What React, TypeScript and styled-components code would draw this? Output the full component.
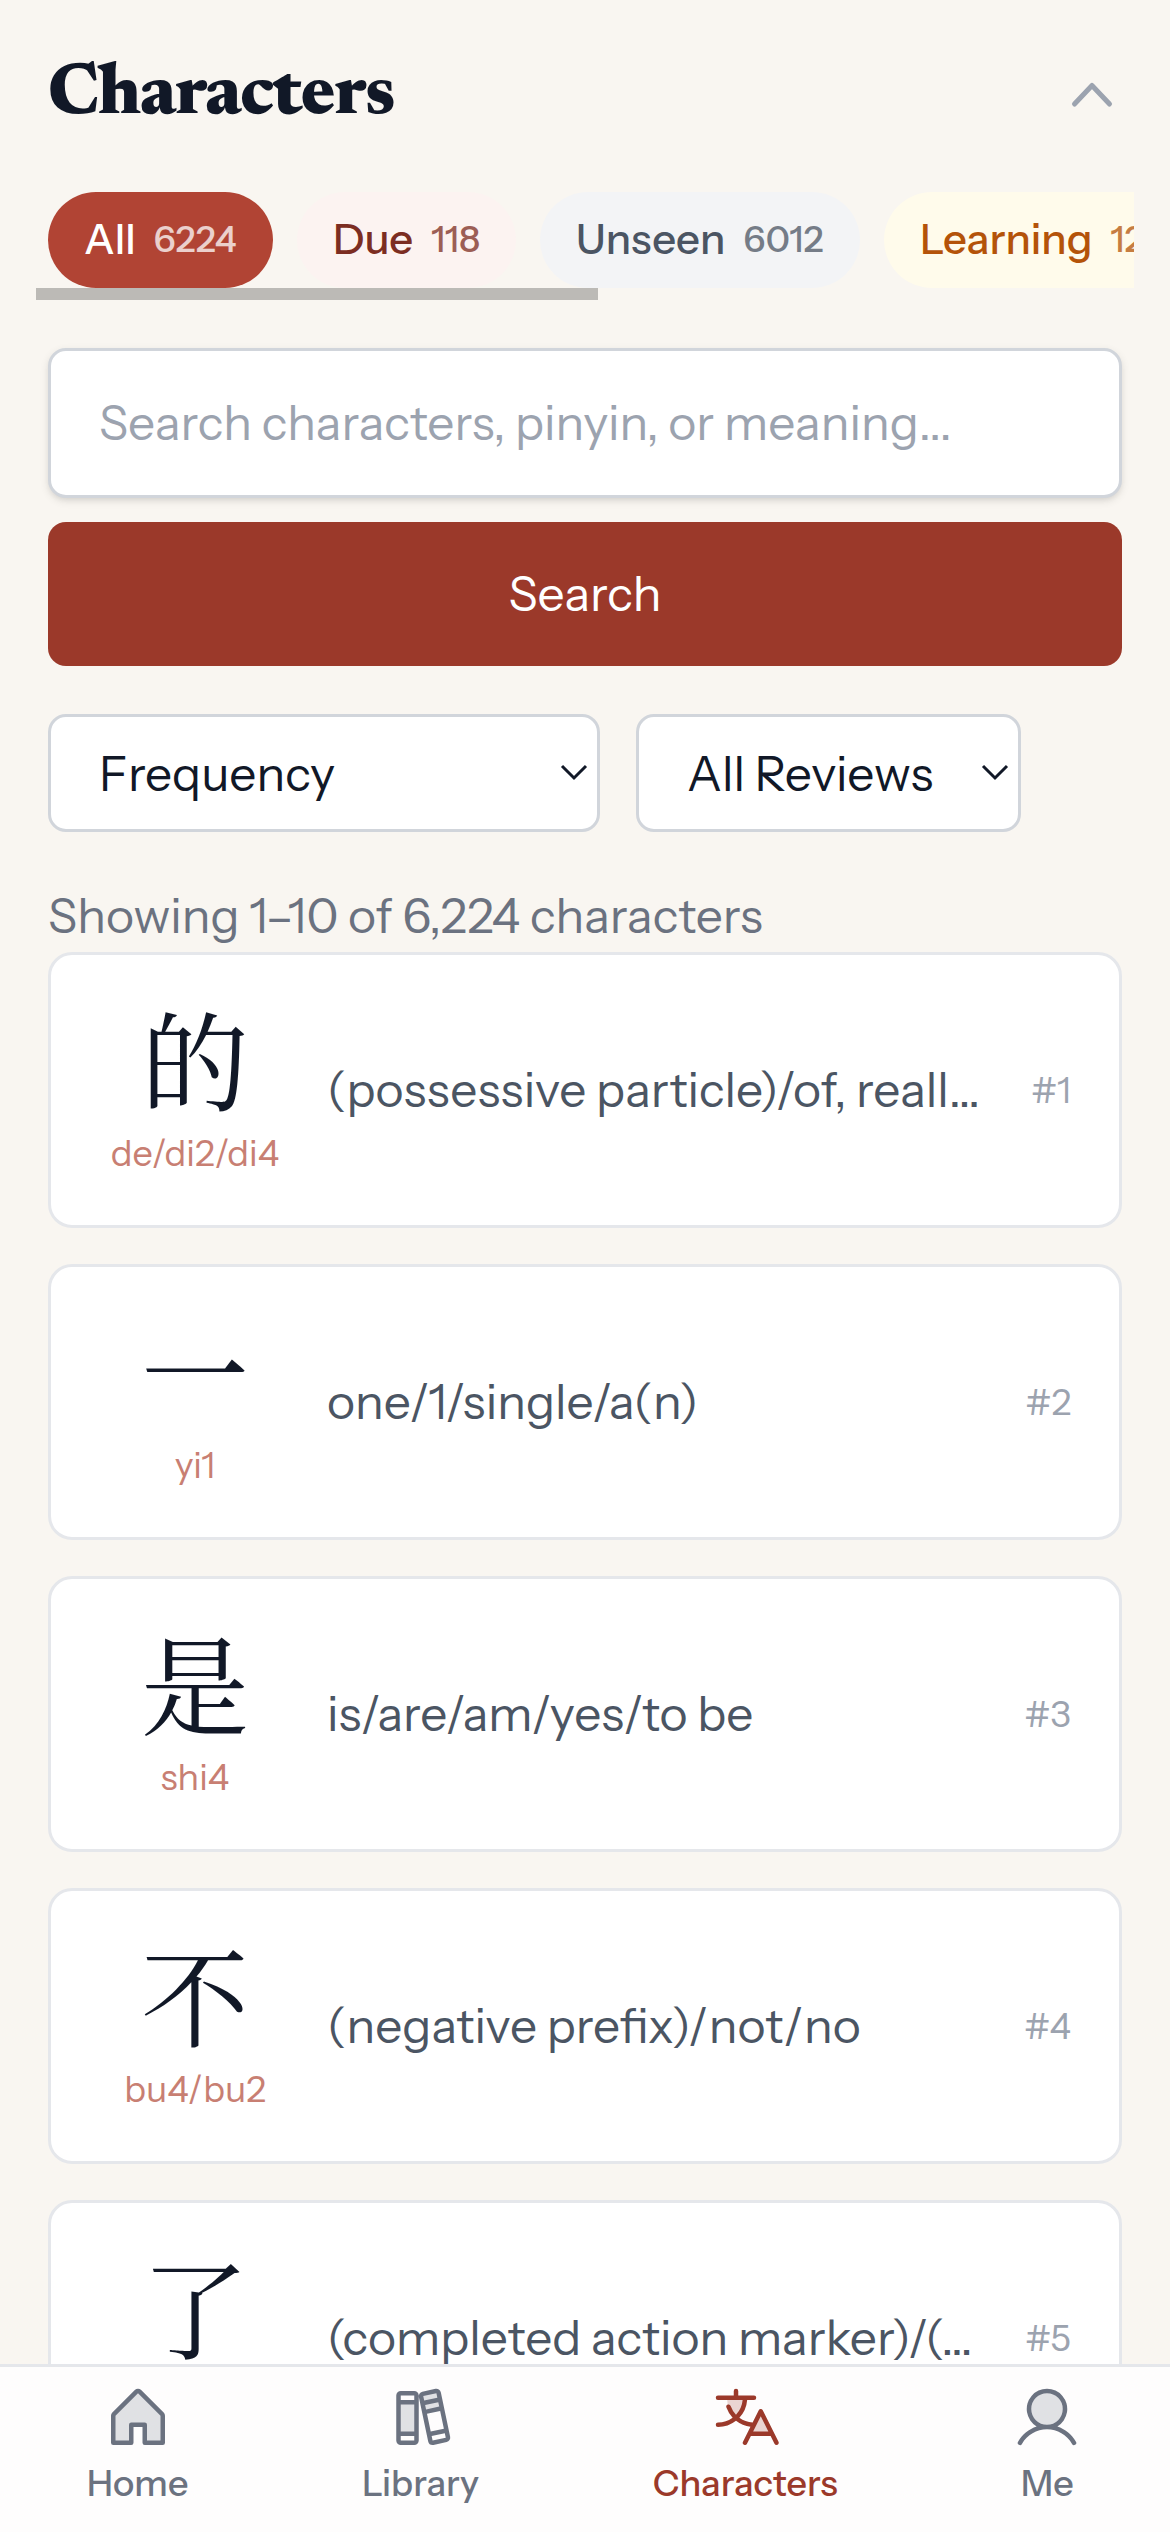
import React from "react";
import styled, { createGlobalStyle } from "styled-components";
import {
  PiHouseDuotone,
  PiBooksDuotone,
  PiTranslateDuotone,
  PiUserDuotone,
} from "react-icons/pi";
import type { IconType } from "react-icons";

const sans = `"Instrument Sans", Inter, "Liberation Sans", "Noto Sans CJK SC", sans-serif`;
const serif = `Newsreader, "Liberation Serif", serif`;
const hanzi = `"Noto Serif CJK SC", "Noto Sans CJK SC", serif`;

const GlobalStyle = createGlobalStyle`
  *, *::before, *::after { box-sizing: border-box; }
  body { margin: 0; background: #f9f6f1; }
  button, input { font-family: inherit; margin: 0; }
`;

const Screen = styled.div`
  display: flex;
  flex-direction: column;
  height: 2532px;
  overflow: hidden;
  background: #f9f6f1;
  color: #111827;
  font-family: ${sans};
  font-size: 48px;
  line-height: 72px;
`;

const Main = styled.main`
  flex: 1;
  min-height: 0;
  overflow: hidden;
  padding: 48px 48px 0;
`;

const Header = styled.header`
  display: flex;
  align-items: center;
  justify-content: space-between;
  height: 93px;
`;

const Title = styled.h1`
  margin: 0;
  padding-top: 2px;
  font-family: ${serif};
  font-size: 72px;
  font-weight: 800;
  letter-spacing: -1.1px;
  line-height: 90px;
  color: #111827;
`;

const CollapseButton = styled.button`
  display: flex;
  padding: 0;
  border: 0;
  background: none;
  color: #9ca3af;

  svg {
    width: 60px;
    height: 60px;
  }
`;

const FilterScroller = styled.div`
  margin: 51px -12px 0;
  overflow: hidden;
`;

const FilterRow = styled.div`
  display: flex;
  gap: 24px;
  padding-left: 12px;
`;

const ScrollThumb = styled.div`
  width: 562px;
  height: 12px;
  background: #bcbab6;
`;

const Pill = styled.button<{ $bg: string; $fg: string; $width: number }>`
  flex: none;
  display: flex;
  align-items: center;
  gap: 18px;
  width: ${(p) => p.$width}px;
  height: 96px;
  padding: 0 36px 2px;
  border: 0;
  border-radius: 48px;
  background: ${(p) => p.$bg};
  color: ${(p) => p.$fg};
  font-size: 42px;
  font-weight: 500;
  white-space: nowrap;
`;

const PillCount = styled.span`
  font-size: 36px;
  opacity: 0.75;
`;

const SearchForm = styled.form`
  display: flex;
  flex-direction: column;
  gap: 24px;
  margin: 48px 0;
`;

const SearchInput = styled.input`
  width: 100%;
  height: 150px;
  padding: 0 48px 2px;
  border: 3px solid #d1d5db;
  border-radius: 18px;
  background: #fff;
  box-shadow: 0 3px 9px rgba(0, 0, 0, 0.1), 0 3px 6px -3px rgba(0, 0, 0, 0.1);
  font-size: 48px;
  outline: none;

  &::placeholder {
    color: #9ca3af;
    opacity: 1;
  }
`;

const SearchButton = styled.button`
  height: 144px;
  padding: 0 0 2px;
  border: 0;
  border-radius: 18px;
  background: #9b392a;
  color: #fff;
  font-size: 48px;
  font-weight: 400;
`;

const SelectRow = styled.div`
  display: flex;
  gap: 36px;
`;

const Select = styled.button<{ $width: number }>`
  display: flex;
  align-items: center;
  justify-content: space-between;
  width: ${(p) => p.$width}px;
  height: 118px;
  padding: 0 9px 0 48px;
  border: 3px solid #d1d5db;
  border-radius: 18px;
  background: #fff;
  color: #111827;
  font-size: 48px;

  svg {
    width: 28px;
    height: 18px;
    margin-bottom: 2px;
  }
`;

const Summary = styled.p`
  margin: 48px 0 0;
  color: #6b7280;
`;

const CardList = styled.ul`
  display: flex;
  flex-direction: column;
  gap: 36px;
  margin: 0;
  padding: 0;
  list-style: none;
`;

const Card = styled.li`
  display: flex;
  align-items: center;
  gap: 36px;
  height: 276px;
  padding: 0 48px;
  border: 3px solid #e5e7eb;
  border-radius: 24px;
  background: #fff;
`;

const Glyph = styled.div`
  flex: none;
  width: 192px;
  text-align: center;
`;

const Hanzi = styled.div`
  font-family: ${hanzi};
  font-size: 108px;
  line-height: 126px;
`;

const Pinyin = styled.div`
  color: #c87f73;
  font-size: 36px;
  line-height: 66px;
`;

const Meaning = styled.div`
  flex: 1;
  min-width: 0;
  color: #4b5563;
  white-space: nowrap;
`;

const Rank = styled.div`
  flex: none;
  color: #9ca3af;
  font-size: 36px;
`;

const BottomNav = styled.nav`
  flex: none;
  display: flex;
  justify-content: space-around;
  height: 168px;
  padding-top: 15px;
  border-top: 3px solid #e5e7eb;
  background: #fefdfd;
`;

const NavItem = styled.a<{ $active: boolean }>`
  display: flex;
  flex-direction: column;
  align-items: center;
  color: ${(p) => (p.$active ? "#9b392a" : "#6b7280")};
  font-size: 36px;
  font-weight: 500;
  line-height: 58px;
  text-decoration: none;

  svg {
    width: 72px;
    height: 72px;
  }
`;

const ChevronUp = () => (
  <svg viewBox="0 0 60 60" fill="none" stroke="currentColor" strokeWidth="5" strokeLinecap="round" strokeLinejoin="round">
    <path d="M12.5 39 30 20.5 47.5 39" />
  </svg>
);

const SelectArrow = () => (
  <svg viewBox="0 0 28 18" fill="none" stroke="currentColor" strokeWidth="3">
    <path d="M2 3 14 15 26 3" />
  </svg>
);

interface Filter {
  label: string;
  count: string;
  bg: string;
  fg: string;
  width: number;
}

const filters: Filter[] = [
  { label: "All", count: "6224", bg: "#b14434", fg: "#ffffff", width: 225 },
  { label: "Due", count: "118", bg: "#fcf3f1", fg: "#7c2d22", width: 219 },
  { label: "Unseen", count: "6012", bg: "#f3f4f6", fg: "#4b5563", width: 320 },
  { label: "Learning", count: "12", bg: "#fffbeb", fg: "#b45309", width: 330 },
];

interface Entry {
  hanzi: string;
  pinyin: string;
  meaning: string;
}

const entries: Entry[] = [
  { hanzi: "的", pinyin: "de/di2/di4", meaning: "(possessive particle)/of, reall…" },
  { hanzi: "一", pinyin: "yi1", meaning: "one/1/single/a(n)" },
  { hanzi: "是", pinyin: "shi4", meaning: "is/are/am/yes/to be" },
  { hanzi: "不", pinyin: "bu4/bu2", meaning: "(negative prefix)/not/no" },
  { hanzi: "了", pinyin: "le/liao3", meaning: "(completed action marker)/(…" },
];

interface Tab {
  label: string;
  icon: IconType;
  active: boolean;
}

const tabs: Tab[] = [
  { label: "Home", icon: PiHouseDuotone, active: false },
  { label: "Library", icon: PiBooksDuotone, active: false },
  { label: "Characters", icon: PiTranslateDuotone, active: true },
  { label: "Me", icon: PiUserDuotone, active: false },
];

export default function App() {
  return (
    <Screen>
      <GlobalStyle />
      <Main>
        <Header>
          <Title>Characters</Title>
          <CollapseButton aria-label="Collapse">
            <ChevronUp />
          </CollapseButton>
        </Header>
        <FilterScroller>
          <FilterRow>
            {filters.map((f) => (
              <Pill key={f.label} $bg={f.bg} $fg={f.fg} $width={f.width}>
                <span>{f.label}</span>
                <PillCount>{f.count}</PillCount>
              </Pill>
            ))}
          </FilterRow>
          <ScrollThumb />
        </FilterScroller>
        <SearchForm>
          <SearchInput placeholder="Search characters, pinyin, or meaning..." />
          <SearchButton type="button">Search</SearchButton>
        </SearchForm>
        <SelectRow>
          <Select $width={552}>
            Frequency
            <SelectArrow />
          </Select>
          <Select $width={385}>
            All Reviews
            <SelectArrow />
          </Select>
        </SelectRow>
        <Summary>Showing 1–10 of 6,224 characters</Summary>
        <CardList>
          {entries.map((e, i) => (
            <Card key={e.hanzi}>
              <Glyph>
                <Hanzi lang="zh-CN">{e.hanzi}</Hanzi>
                <Pinyin>{e.pinyin}</Pinyin>
              </Glyph>
              <Meaning>{e.meaning}</Meaning>
              <Rank>#{i + 1}</Rank>
            </Card>
          ))}
        </CardList>
      </Main>
      <BottomNav>
        {tabs.map(({ label, icon: Icon, active }) => (
          <NavItem key={label} $active={active}>
            <Icon />
            {label}
          </NavItem>
        ))}
      </BottomNav>
    </Screen>
  );
}
